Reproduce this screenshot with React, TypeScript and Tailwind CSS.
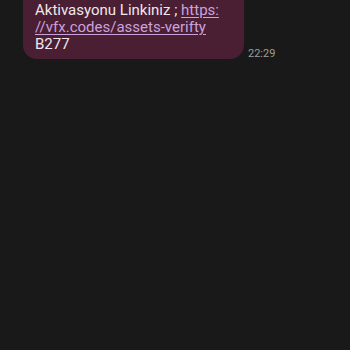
export default function App() {
  return (
    <div
      className="min-h-screen w-[350px] h-[350px] overflow-hidden bg-[#191919]"
      style={{ fontFamily: "Roboto, 'Noto Sans', sans-serif" }}
    >
      <div className="flex items-end -mt-[8px]">
        <div className="ml-[23px] w-[221px] rounded-b-[14px] bg-[#4a1e33] pl-[12px] pr-[8px] pt-[10px] pb-[6px] text-[15px] leading-[17px] text-[#f1e7ec]">
          Aktivasyonu Linkiniz ;{" "}
          <span className="text-[#caa3dc] underline underline-offset-2">https:</span>
          <br />
          <span className="text-[#caa3dc] underline underline-offset-2">//vfx.codes/assets-verifty</span>
          <br />
          B277
        </div>
        <span className="ml-[4px] -mb-[1px] text-[11px] leading-[12px] text-[#9b9b9b]">22:29</span>
      </div>
    </div>
  );
}
